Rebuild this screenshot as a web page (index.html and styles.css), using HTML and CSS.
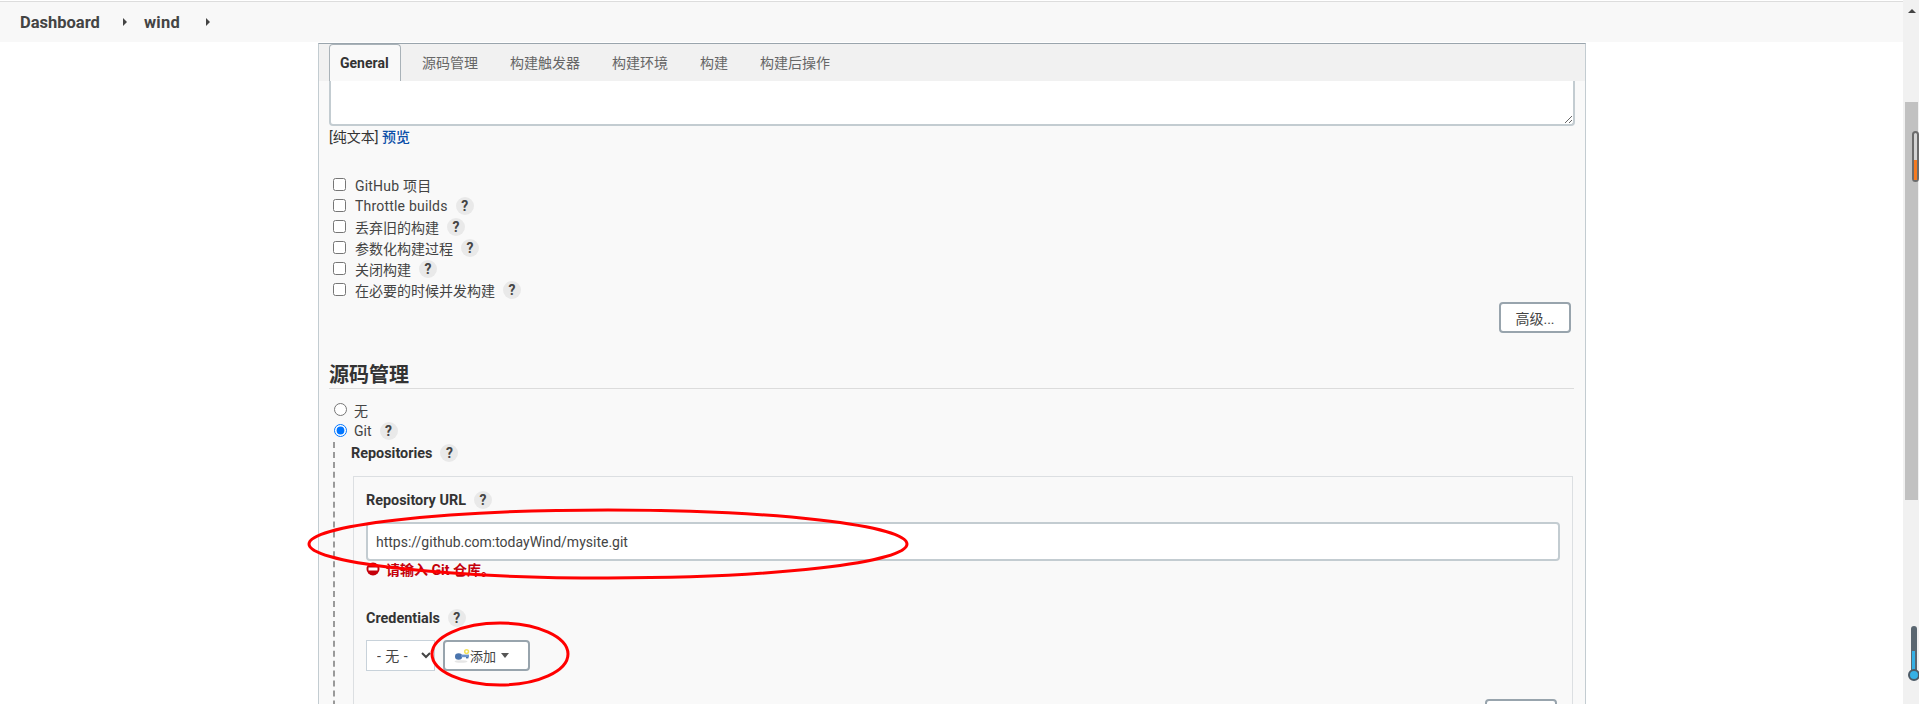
FILE: index.html
```html
<!DOCTYPE html>
<html lang="zh-CN">
<head>
    <meta charset="UTF-8">
    <title>wind Config</title>
    <link rel="stylesheet" href="styles.css">
</head>
<body>
    <div class="page">
        <div class="main">
            <div class="breadcrumbs">
                <a class="crumb">Dashboard</a><span class="crumb-arrow"></span>
                <a class="crumb crumb-job">wind</a><span class="crumb-arrow"></span>
            </div>

            <div class="panel">
                <div class="tabs">
                    <div class="tab active">General</div>
                    <div class="tab">源码管理</div>
                    <div class="tab">构建触发器</div>
                    <div class="tab">构建环境</div>
                    <div class="tab">构建</div>
                    <div class="tab">构建后操作</div>
                </div>

                <textarea class="description"></textarea>
                <div class="format-hint">[纯文本] <a class="preview-link">预览</a></div>

                <div class="check-list">
                    <label class="check-row"><input type="checkbox"><span class="latin">GitHub 项目</span></label>
                    <label class="check-row"><input type="checkbox"><span class="latin">Throttle builds</span><i class="help">?</i></label>
                    <label class="check-row"><input type="checkbox"><span>丢弃旧的构建</span><i class="help">?</i></label>
                    <label class="check-row"><input type="checkbox"><span>参数化构建过程</span><i class="help">?</i></label>
                    <label class="check-row"><input type="checkbox"><span>关闭构建</span><i class="help">?</i></label>
                    <label class="check-row"><input type="checkbox"><span>在必要的时候并发构建</span><i class="help">?</i></label>
                </div>

                <div class="advanced-row">
                    <button class="btn btn-advanced">高级...</button>
                </div>

                <h2 class="section-title">源码管理</h2>

                <div class="radio-list">
                    <label class="radio-row"><input type="radio" name="scm"><span>无</span></label>
                    <label class="radio-row"><input type="radio" name="scm" checked><span>Git</span><i class="help">?</i></label>
                </div>

                <div class="git-block">
                    <div class="field-label repos-label">Repositories<i class="help">?</i></div>
                    <div class="repo-box">
                        <div class="field-label">Repository URL<i class="help">?</i></div>
                        <input class="url-input" type="text" value="https://github.com:todayWind/mysite.git">
                        <div class="error-row">
                            <svg class="error-icon" width="14" height="14" viewBox="0 0 14 14">
                                <circle cx="7" cy="7" r="6.5" fill="#c4000a"/>
                                <rect x="2.5" y="5.5" width="9" height="3" fill="#fff"/>
                            </svg>
                            <span>请输入 Git 仓库。</span>
                        </div>
                        <div class="field-label cred-label">Credentials<i class="help">?</i></div>
                        <div class="cred-row">
                            <select class="cred-select"><option>- 无 -</option></select>
                            <button class="btn btn-add">
                                <svg class="key-icon" width="16" height="16" viewBox="0 0 16 16">
                                    <ellipse cx="7" cy="13.5" rx="6.5" ry="1.3" fill="#e6e6e6"/>
                                    <ellipse cx="4.6" cy="8.5" rx="3.6" ry="3.2" fill="#4a74ad"/>
                                    <rect x="7" y="6.6" width="8" height="2.6" fill="#6a94cc"/>
                                    <rect x="12" y="9" width="2.4" height="1.4" fill="#4a74ad"/>
                                    <circle cx="12.6" cy="3.6" r="1.9" fill="none" stroke="#f3e25c" stroke-width="1.5"/>
                                </svg>
                                <span>添加</span>
                                <span class="caret"></span>
                            </button>
                        </div>
                        <div class="advanced-row next-row">
                            <button class="btn btn-next"></button>
                        </div>
                    </div>
                </div>
            </div>
        </div>

        <div class="scrollbar">
            <span class="scroll-up"></span>
            <div class="scroll-thumb"></div>
        </div>
    </div>

    <!-- red marks drawn on top of the screenshot -->
    <svg class="marks" width="1919" height="704" viewBox="0 0 1919 704">
        <ellipse cx="608" cy="544" rx="299" ry="34" fill="none" stroke="#f00" stroke-width="3"/>
        <ellipse cx="500" cy="654" rx="68" ry="31" fill="none" stroke="#f00" stroke-width="3"/>
    </svg>

    <!-- page-marker gadgets over the scrollbar -->
    <div class="thermo thermo-top"><div class="thermo-fill"></div></div>
    <div class="thermo-low">
        <div class="thermo-low-fill"></div>
        <div class="thermo-bulb"></div>
    </div>
</body>
</html>
```

FILE: styles.css
```css
* {
    box-sizing: border-box;
}

html, body {
    margin: 0;
    height: 100%;
    overflow: hidden;
}

body {
    font-family: Roboto, "Noto Sans CJK SC", sans-serif;
    font-size: 14px;
    color: #333;
    background-color: #fff;
    position: relative;
}

.page {
    display: flex;
    height: 704px;
}

.main {
    width: 1903px;
    height: 704px;
    overflow: hidden;
}

/* top bar */
.breadcrumbs {
    height: 41px;
    margin-top: 1px;
    border-top: 1px solid #ddd;
    background-color: #f8f8f8;
    padding-left: 20px;
    display: flex;
    align-items: center;
}

.crumb {
    font-weight: 700;
    font-size: 16.5px;
    color: #444;
}

.crumb-job {
    margin-left: 1px;
    margin-right: 3px;
    letter-spacing: 0.3px;
}

.crumb-arrow {
    width: 0;
    height: 0;
    margin: 0 16px 0 23px;
    border-left: 4px solid #444;
    border-top: 4px solid transparent;
    border-bottom: 4px solid transparent;
}

/* config panel */
.panel {
    width: 1268px;
    height: 661px;
    margin-left: 318px;
    margin-top: 1px;
    padding: 0 11px 0 10px;
    border: 1px solid #c3ccd1;
    border-top-color: #9aa5ad;
    border-bottom: none;
    background-color: #f9f9f9;
}

.tabs {
    display: flex;
    height: 37px;
    margin: 0 -11px 0 -10px;
    padding-left: 10px;
    background-color: #f1f1f1;
}

.tab {
    padding: 0 16px;
    line-height: 38px;
    color: #666;
    white-space: nowrap;
}

.tab.active {
    width: 72px;
    padding: 0 10px;
    margin-right: 5px;
    background-color: #f9f9f9;
    border: 1px solid #a9b2b8;
    border-bottom: none;
    border-radius: 4px 4px 0 0;
    font-weight: 700;
    color: #333;
    line-height: 37px;
}

.description {
    display: block;
    width: 1246px;
    height: 45px;
    padding: 4px;
    border: 2px solid #c3ccd1;
    border-top: none;
    border-radius: 0 0 4px 4px;
    background-color: #fff;
    outline: none;
}

.format-hint {
    height: 22px;
    line-height: 22px;
    font-size: 14px;
}

.preview-link {
    color: #0b4fa8;
    font-weight: 500;
}

.check-list {
    margin-top: 26px;
}

.check-row,
.radio-row {
    display: flex;
    align-items: center;
    height: 21px;
    color: #444;
}

.latin {
    letter-spacing: 0.2px;
}

.check-row input {
    width: 13px;
    height: 13px;
    margin: 0 9px 0 4px;
}

.radio-row input {
    width: 13px;
    height: 13px;
    margin: 0 7px 0 5px;
}

.help {
    display: inline-block;
    flex: none;
    width: 18px;
    height: 18px;
    margin-left: 8px;
    border-radius: 50%;
    background-color: #e9e9e9;
    color: #444;
    font-style: normal;
    font-weight: 700;
    font-size: 14px;
    line-height: 18px;
    text-align: center;
}

.advanced-row {
    display: flex;
    justify-content: flex-end;
    margin-top: 2px;
    padding-right: 3px;
}

.btn {
    font-family: inherit;
    font-size: 14px;
    color: #444;
    background-color: #fff;
    border: 2px solid #98a4ad;
    border-radius: 4px;
}

.btn-advanced {
    width: 72px;
    height: 31px;
    padding: 0;
}

.section-title {
    margin: 27px 0 10px;
    height: 29px;
    font-size: 20px;
    font-weight: 700;
    line-height: 30px;
    color: #333;
    border-bottom: 1px solid #dcdcdc;
}

.radio-list {
    margin-top: 10px;
    padding-bottom: 1px;
}

.git-block {
    margin-left: 4px;
    border-left: 2px dashed #9a9a9a;
    padding-left: 16px;
}

.field-label {
    display: flex;
    align-items: center;
    height: 22px;
    font-weight: 700;
    font-size: 14.4px;
    color: #333;
}

.repo-box {
    margin: 12px 1px 0 2px;
    padding: 12px 12px 0 12px;
    border: 1px solid #dcdfe2;
    height: 300px;
}

.url-input {
    display: block;
    width: 100%;
    height: 39px;
    margin-top: 11px;
    padding: 0 8px;
    border: 2px solid #c3ccd1;
    border-radius: 4px;
    background-color: #fff;
    font-family: inherit;
    font-size: 14px;
    color: #444;
    outline: none;
}

.error-row {
    display: flex;
    align-items: center;
    gap: 6px;
    height: 19px;
    margin-top: -2px;
    color: #c4000a;
    font-weight: 700;
    font-size: 14px;
}

.cred-label {
    margin-top: 29px;
}

.cred-row {
    display: flex;
    gap: 8px;
    margin-top: 11px;
}

.cred-select {
    width: 69px;
    height: 31px;
    padding-left: 6px;
    border: 1px solid #c8d2da;
    background-color: #fff;
    font-family: inherit;
    font-size: 14px;
    word-spacing: 1px;
    color: #444;
}

.btn-add {
    display: flex;
    align-items: center;
    width: 87px;
    height: 31px;
    padding: 0 0 0 9px;
    font-size: 13px;
}

.key-icon {
    flex: none;
}

.caret {
    width: 0;
    height: 0;
    margin-left: 5px;
    border-top: 5px solid #555;
    border-left: 4px solid transparent;
    border-right: 4px solid transparent;
}

.next-row {
    margin-top: 28px;
}

.btn-next {
    width: 72px;
    height: 31px;
}

/* scrollbar */
.scrollbar {
    width: 16px;
    height: 704px;
    background-color: #f1f1f1;
    padding-top: 9px;
}

.scroll-up {
    display: block;
    width: 0;
    height: 0;
    margin-left: 5px;
    border-bottom: 4px solid #444;
    border-left: 4px solid transparent;
    border-right: 4px solid transparent;
}

.scroll-thumb {
    width: 13px;
    height: 398px;
    margin-top: 89px;
    margin-left: 2px;
    background-color: #c1c1c1;
}

.marks {
    position: absolute;
    left: 0;
    top: 0;
    pointer-events: none;
}

.thermo {
    position: absolute;
    left: 1912px;
    top: 131px;
    width: 7px;
    height: 51px;
    border: 2px solid #6b6b6b;
    border-radius: 4px;
    background-color: #d4d4d4;
}

.thermo-fill {
    position: absolute;
    left: 0;
    right: 0;
    bottom: 0;
    height: 20px;
    background-color: #f57a20;
}

.thermo-low {
    position: absolute;
    left: 1911px;
    top: 626px;
    width: 6px;
    height: 50px;
    border-radius: 3px 3px 0 0;
    background-color: #5a6670;
}

.thermo-low-fill {
    position: absolute;
    left: 1px;
    width: 3px;
    top: 25px;
    bottom: 0;
    background-color: #35b0e5;
}

.thermo-bulb {
    position: absolute;
    left: -3px;
    top: 43px;
    width: 12px;
    height: 12px;
    border: 2px solid #4b5a66;
    border-radius: 50%;
    background-color: #35b0e5;
}
```
